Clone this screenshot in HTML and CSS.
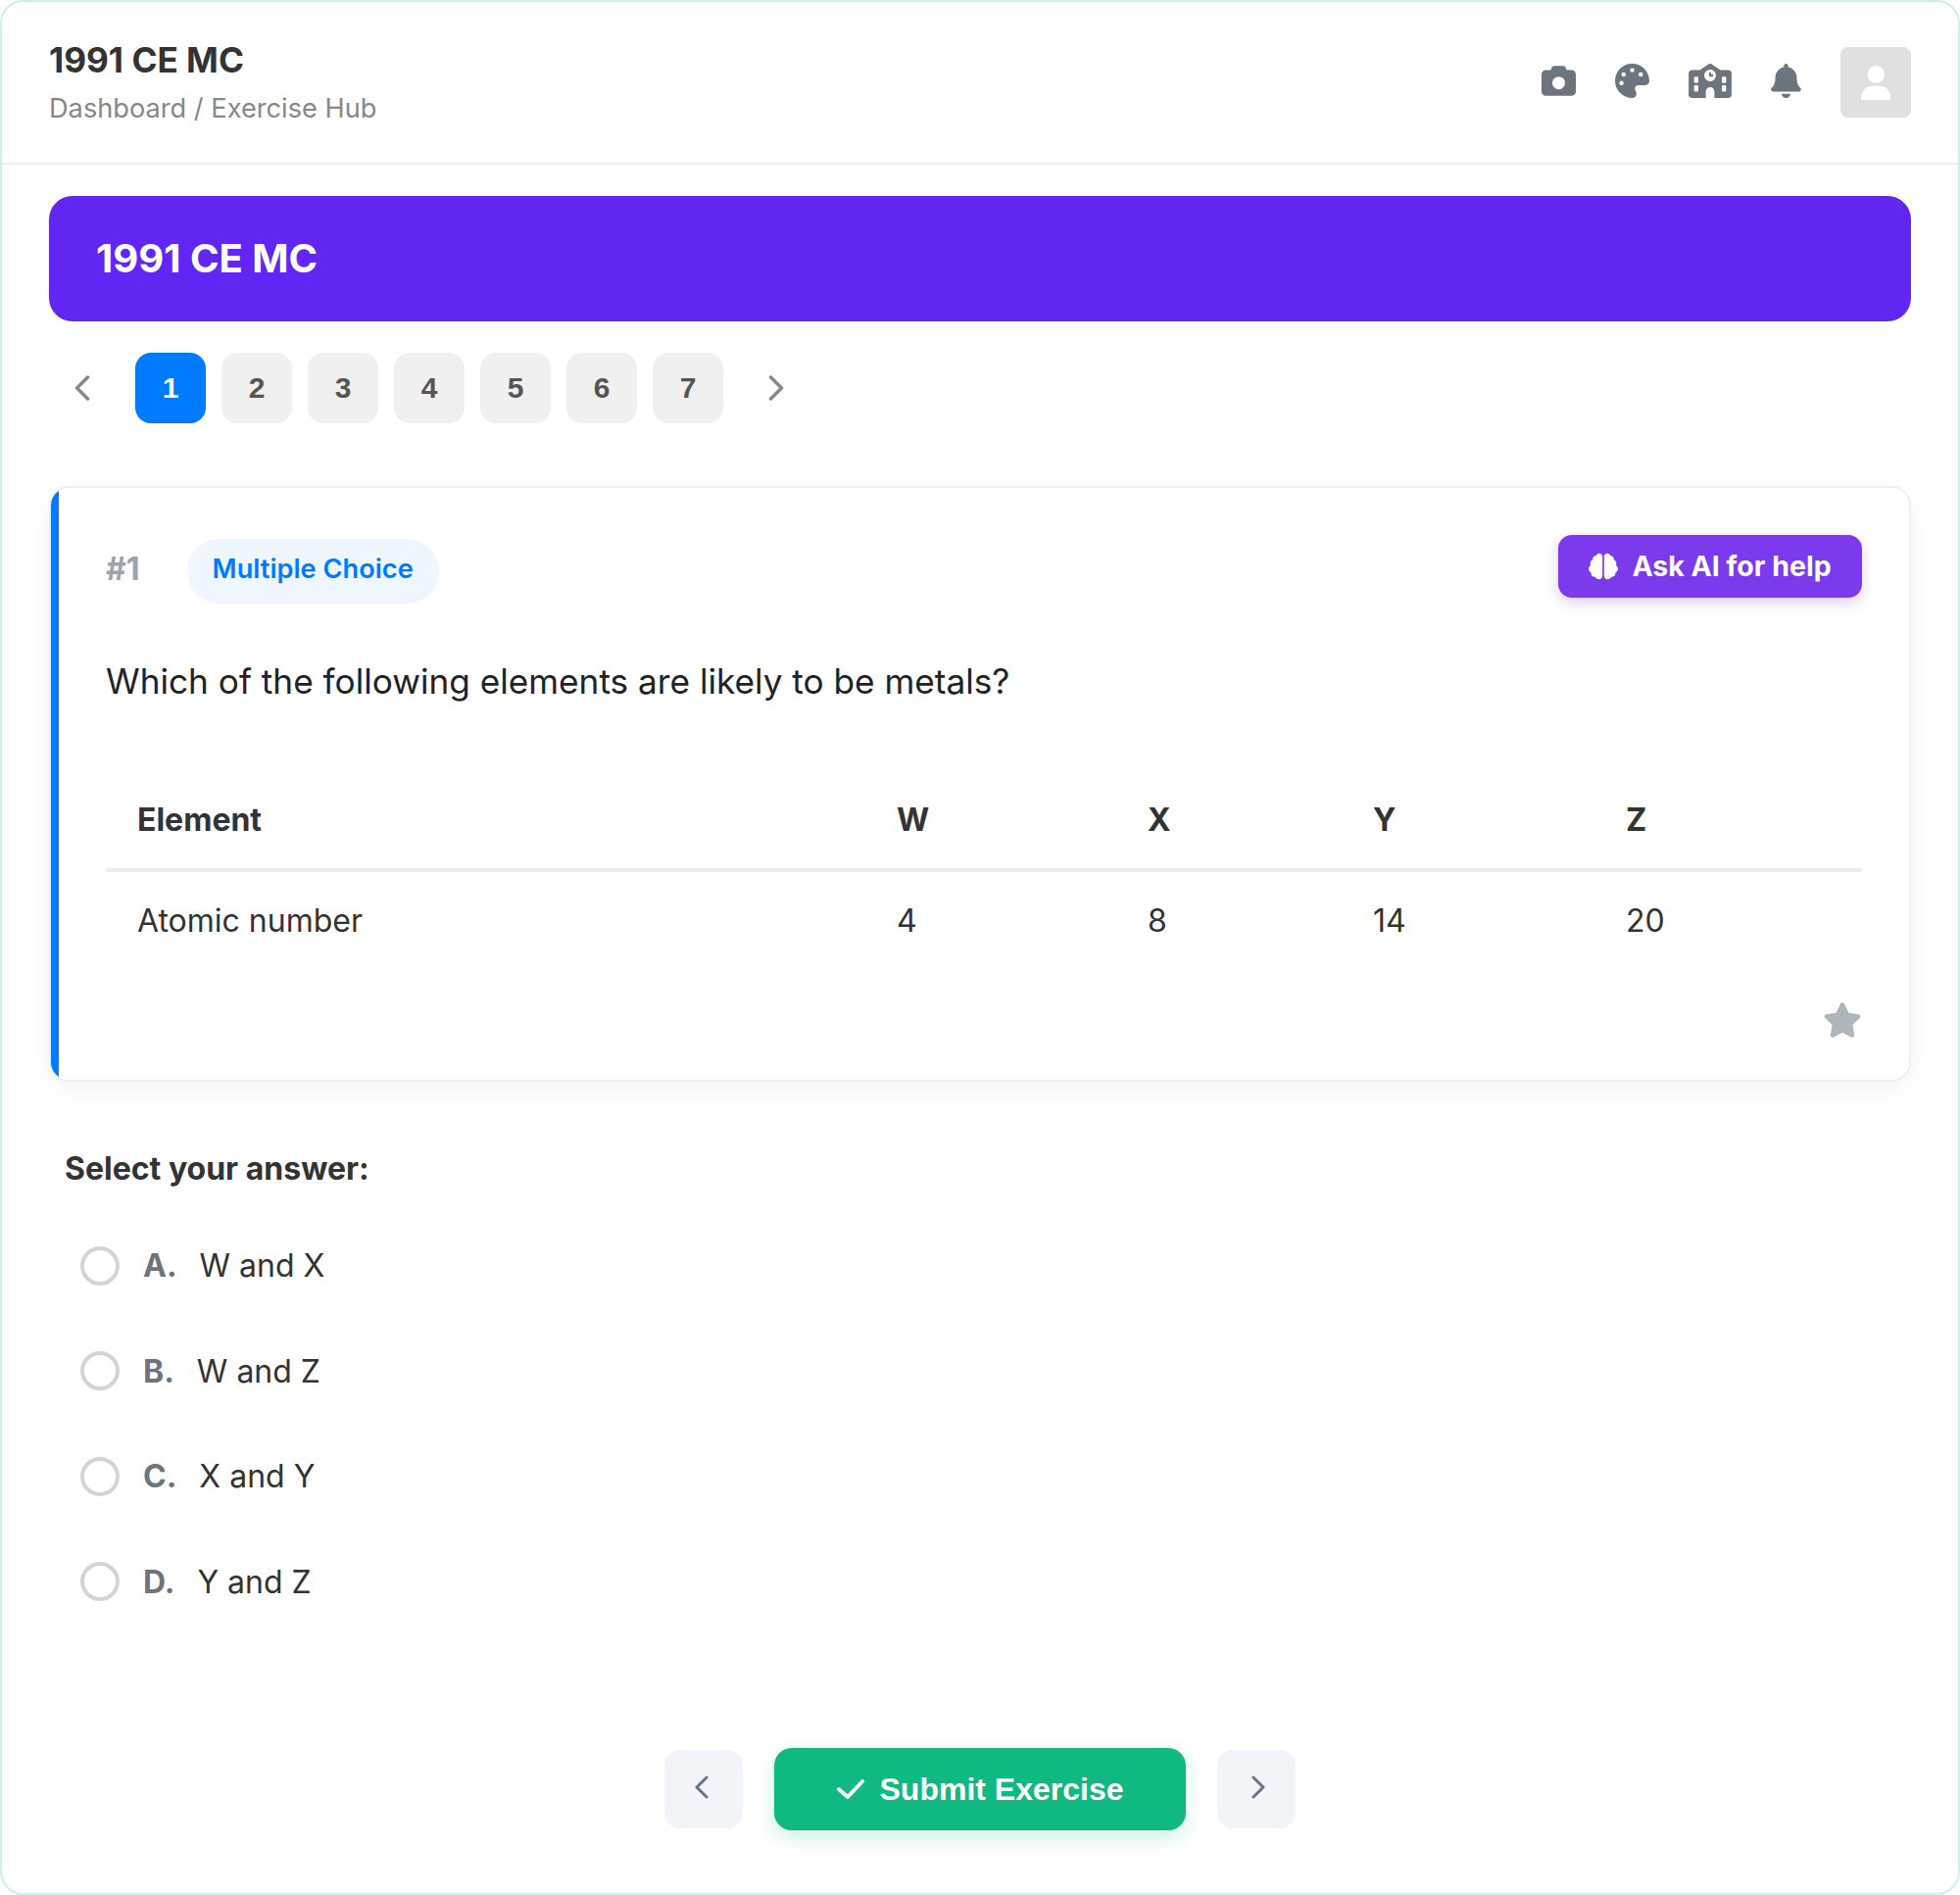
FILE: index.html
```html
<!DOCTYPE html>
<html lang="en">
<head>
    <meta charset="UTF-8">
    <title>1991 CE MC</title>
    <link rel="stylesheet" href="styles.css">
</head>
<body>
<div class="app">
    <header class="topbar">
        <div>
            <h1 class="topbar-title">1991 CE MC</h1>
            <div class="crumbs">Dashboard / Exercise Hub</div>
        </div>
        <div class="topbar-icons">
            <svg class="icon-top" viewBox="0 0 512 512"><path d="M149.1 64.8L138.7 96H64C28.7 96 0 124.7 0 160V416c0 35.3 28.7 64 64 64H448c35.3 0 64-28.7 64-64V160c0-35.3-28.7-64-64-64H373.3L362.9 64.8C356.4 45.2 338.1 32 317.4 32H194.6c-20.7 0-39 13.2-45.5 32.8zM256 192a96 96 0 1 1 0 192 96 96 0 1 1 0-192z"/></svg>
            <svg class="icon-top" viewBox="0 0 512 512"><path d="M512 256c0 .9 0 1.8 0 2.7c-.4 36.5-33.6 61.3-70.1 61.3H344c-26.5 0-48 21.5-48 48c0 3.4 .4 6.7 1 9.9c2.1 10.2 6.5 20 10.8 29.9c6.1 13.8 12.1 27.5 12.1 42c0 31.8-21.6 60.7-53.4 62c-3.5 .1-7 .2-10.6 .2C114.6 512 0 397.4 0 256S114.6 0 256 0S512 114.6 512 256zM128 288a32 32 0 1 0 -64 0 32 32 0 1 0 64 0zm0-96a32 32 0 1 0 0-64 32 32 0 1 0 0 64zM288 96a32 32 0 1 0 -64 0 32 32 0 1 0 64 0zm96 96a32 32 0 1 0 0-64 32 32 0 1 0 0 64z"/></svg>
            <svg class="icon-top icon-school" viewBox="0 0 640 512"><path d="M337.8 5.4C327-1.8 313-1.8 302.2 5.4L166.3 96H48C21.5 96 0 117.5 0 144V464c0 26.5 21.5 48 48 48H256V416c0-35.3 28.7-64 64-64s64 28.7 64 64v96H592c26.5 0 48-21.5 48-48V144c0-26.5-21.5-48-48-48H473.7L337.8 5.4zM96 192h32c8.8 0 16 7.2 16 16v64c0 8.8-7.2 16-16 16H96c-8.8 0-16-7.2-16-16V208c0-8.8 7.2-16 16-16zm400 16c0-8.8 7.2-16 16-16h32c8.8 0 16 7.2 16 16v64c0 8.8-7.2 16-16 16H512c-8.8 0-16-7.2-16-16V208zM96 320h32c8.8 0 16 7.2 16 16v64c0 8.8-7.2 16-16 16H96c-8.8 0-16-7.2-16-16V336c0-8.8 7.2-16 16-16zm400 16c0-8.8 7.2-16 16-16h32c8.8 0 16 7.2 16 16v64c0 8.8-7.2 16-16 16H512c-8.8 0-16-7.2-16-16V336zM232 176a88 88 0 1 1 176 0 88 88 0 1 1 -176 0zm88-48c-8.8 0-16 7.2-16 16v32c0 8.8 7.2 16 16 16h32c8.8 0 16-7.2 16-16s-7.2-16-16-16H336V144c0-8.8-7.2-16-16-16z"/></svg>
            <svg class="icon-top icon-bell" viewBox="0 0 448 512"><path d="M224 512c35.32 0 63.97-28.65 63.97-64H160.03c0 35.35 28.65 64 63.97 64zm215.39-149.71c-19.32-20.76-55.47-51.99-55.47-154.29 0-77.7-54.48-139.9-127.94-155.16V32c0-17.67-14.32-32-31.98-32s-31.98 14.33-31.98 32v20.84C118.56 68.1 64.08 130.3 64.08 208c0 102.3-36.15 133.53-55.47 154.29-6 6.45-8.66 14.16-8.61 21.71.11 16.4 12.98 32 32.1 32h383.8c19.12 0 32-15.6 32.1-32 .05-7.55-2.61-15.27-8.61-21.71z"/></svg>
            <div class="avatar">
                <svg class="avatar-icon" viewBox="0 0 448 512"><path d="M224 256A128 128 0 1 0 224 0a128 128 0 1 0 0 256zm-45.7 48C79.8 304 0 383.8 0 482.3C0 498.7 13.3 512 29.7 512H418.3c16.4 0 29.7-13.3 29.7-29.7C448 383.8 368.2 304 269.7 304H178.3z"/></svg>
            </div>
        </div>
    </header>

    <main class="content">
        <div class="banner">1991 CE MC</div>

        <nav class="pager">
            <button class="pager-arrow"><svg class="chev" viewBox="0 0 20 26"><path d="M13.5 2 2.5 13l11 11"/></svg></button>
            <button class="page-num cur">1</button>
            <button class="page-num">2</button>
            <button class="page-num">3</button>
            <button class="page-num">4</button>
            <button class="page-num">5</button>
            <button class="page-num">6</button>
            <button class="page-num">7</button>
            <button class="pager-arrow"><svg class="chev" viewBox="0 0 20 26"><path d="M6.5 2 17.5 13l-11 11"/></svg></button>
        </nav>

        <section class="card">
            <div class="card-head">
                <div class="card-meta">
                    <span class="q-num">#1</span>
                    <span class="q-type">Multiple Choice</span>
                </div>
                <button class="ask-ai">
                    <svg class="brain" viewBox="0 0 576 512"><path d="M208 0c-29.9 0-54.7 20.5-61.8 48.2-.8 0-1.4-.2-2.2-.2-35.3 0-64 28.7-64 64 0 4.8.6 9.5 1.7 14C52.5 138 32 166.6 32 200c0 12.6 3.2 24.3 8.3 34.9C16.3 248.7 0 274.3 0 304c0 33.3 20.4 61.9 49.4 73.9-.9 4.6-1.4 9.3-1.4 14.1 0 39.8 32.2 72 72 72 4.1 0 8.1-.5 12-1.2 9.6 28.5 36.2 49.2 68 49.2 39.8 0 72-32.2 72-72V64c0-35.3-28.7-64-64-64zm368 304c0-29.7-16.3-55.3-40.3-69.1 5.2-10.6 8.3-22.3 8.3-34.9 0-33.4-20.5-62-49.7-74 1-4.5 1.7-9.2 1.7-14 0-35.3-28.7-64-64-64-.8 0-1.5.2-2.2.2C422.7 20.5 397.9 0 368 0c-35.3 0-64 28.6-64 64v376c0 39.8 32.2 72 72 72 31.8 0 58.4-20.7 68-49.2 3.9.7 7.9 1.2 12 1.2 39.8 0 72-32.2 72-72 0-4.8-.5-9.5-1.4-14.1 29-12 49.4-40.6 49.4-73.9z"/></svg>
                    Ask AI for help
                </button>
            </div>

            <p class="question">Which of the following elements are likely to be metals?</p>

            <table class="el-table">
                <colgroup>
                    <col class="col-name"><col class="col-w"><col class="col-x"><col class="col-y"><col class="col-z">
                </colgroup>
                <thead>
                    <tr><th>Element</th><th>W</th><th>X</th><th>Y</th><th>Z</th></tr>
                </thead>
                <tbody>
                    <tr><td>Atomic number</td><td>4</td><td>8</td><td>14</td><td>20</td></tr>
                </tbody>
            </table>

            <div class="card-foot">
                <svg class="star" viewBox="0 0 576 512"><path d="M316.9 18C311.6 7 300.4 0 288.1 0s-23.4 7-28.8 18L195 150.3 51.4 171.5c-12 1.8-22 10.2-25.7 21.7s-.7 24.2 7.9 32.7L137.8 329 113.2 474.7c-2 12 3 24.2 12.9 31.3s23 8 33.8 2.3l128.3-68.5 128.3 68.5c10.8 5.7 23.9 4.9 33.8-2.3s14.9-19.3 12.9-31.3L438.5 329 542.7 225.9c8.6-8.5 11.7-21.2 7.9-32.7s-13.7-19.9-25.7-21.7L381.2 150.3 316.9 18z"/></svg>
            </div>
        </section>

        <section class="answers">
            <h2 class="answers-title">Select your answer:</h2>
            <div class="option"><span class="radio"></span><span class="opt-letter">A.</span><span class="opt-text">W and X</span></div>
            <div class="option"><span class="radio"></span><span class="opt-letter">B.</span><span class="opt-text">W and Z</span></div>
            <div class="option"><span class="radio"></span><span class="opt-letter">C.</span><span class="opt-text">X and Y</span></div>
            <div class="option"><span class="radio"></span><span class="opt-letter">D.</span><span class="opt-text">Y and Z</span></div>
        </section>

        <div class="bottom-nav">
            <button class="nav-btn"><svg class="nav-chev" viewBox="0 0 18 28"><path d="M12 2 2 12l10 10"/></svg></button>
            <button class="submit">
                <svg class="check" viewBox="0 0 28 20"><path d="M2 10l9 8L26 2"/></svg>
                Submit Exercise
            </button>
            <button class="nav-btn"><svg class="nav-chev" viewBox="0 0 18 28"><path d="M6 2l10 10-10 10"/></svg></button>
        </div>
    </main>
</div>
</body>
</html>
```

FILE: styles.css
```css
*{
    margin: 0;
    padding: 0;
    box-sizing: border-box;
}
body{
    background-color: #fff;
    font-family: Inter, "Liberation Sans", sans-serif;
    color: #333;
}
button{
    border: none;
    cursor: pointer;
}
.app{
    height: 1934px;
    border: 2px solid #cdf0e9;
    border-radius: 24px;
    background-color: #fff;
}

/* top bar */
.topbar{
    height: 166px;
    padding: 0 48px;
    display: flex;
    justify-content: space-between;
    align-items: center;
    border-bottom: 2px solid #eee;
}
.topbar-title{
    font-size: 35.2px;
    line-height: 44px;
    font-weight: 700;
}
.crumbs{
    margin-top: 10px;
    font-size: 27.2px;
    line-height: 36px;
    color: #888;
}
.topbar-icons{
    display: flex;
    align-items: center;
    gap: 40px;
}
.icon-top{
    width: 35px;
    height: 35px;
    margin-bottom: 3px;
    fill: #6c757d;
}
.icon-school{
    width: 44px;
}
.icon-bell{
    width: 31px;
}
.avatar{
    width: 72px;
    height: 72px;
    border-radius: 8px;
    background-color: #e0e0e0;
    display: flex;
    justify-content: center;
    align-items: center;
}
.avatar-icon{
    width: 30.6px;
    height: 35px;
    fill: #fff;
}

.content{
    padding: 32px 48px 0;
}
.banner{
    height: 128px;
    padding: 0 48px 1px;
    display: flex;
    align-items: center;
    border-radius: 24px;
    background-color: #6226f3;
    color: #fff;
    font-size: 40px;
    font-weight: 700;
}

/* page numbers */
.pager{
    margin-top: 32px;
    display: flex;
    gap: 16px;
}
.pager-arrow{
    width: 72px;
    height: 72px;
    background: none;
    display: flex;
    justify-content: center;
    align-items: center;
}
.chev{
    width: 20px;
    height: 26px;
    fill: none;
    stroke: #888;
    stroke-width: 3.5;
    stroke-linecap: round;
    stroke-linejoin: round;
}
.page-num{
    width: 72px;
    height: 72px;
    border-radius: 16px;
    background-color: #f0f0f0;
    color: #555;
    font-family: "Liberation Sans", sans-serif;
    font-size: 30px;
    font-weight: 700;
}
.page-num.cur{
    background-color: #007bff;
    color: #fff;
}

/* question card */
.card{
    position: relative;
    overflow: hidden;
    height: 608px;
    margin-top: 64px;
    padding: 48px 48px 0 56px;
    border: 2px solid #f0f0f0;
    border-radius: 20px;
    background-color: #fff;
    box-shadow: 0 8px 30px rgba(0,0,0,0.05);
}
.card::before{
    content: "";
    position: absolute;
    left: 0;
    top: 0;
    bottom: 0;
    width: 8px;
    background-color: #007bff;
}
.card-head{
    display: flex;
    justify-content: space-between;
    align-items: flex-start;
}
.card-meta{
    margin-top: 4px;
    display: flex;
    align-items: center;
    gap: 48px;
}
.q-num{
    padding-bottom: 5px;
    font-size: 32px;
    font-weight: 700;
    color: #9ca3af;
}
.q-type{
    height: 66px;
    padding: 0 26px 5px;
    display: flex;
    align-items: center;
    border-radius: 33px;
    background-color: #eff6ff;
    color: #007bff;
    font-size: 27.2px;
    font-weight: 600;
}
.ask-ai{
    height: 64px;
    width: 310px;
    display: flex;
    justify-content: center;
    align-items: center;
    gap: 14px;
    padding-bottom: 1px;
    border-radius: 14px;
    background-color: #7c3aed;
    color: #fff;
    font-family: Inter, sans-serif;
    font-size: 28.5px;
    font-weight: 700;
    box-shadow: 0 5px 14px rgba(124,58,237,0.25);
}
.brain{
    width: 30px;
    height: 28px;
    fill: #fff;
}
.question{
    margin-top: 54px;
    font-size: 35.2px;
    line-height: 50px;
    color: #222;
}
.el-table{
    width: 100%;
    margin-top: 68px;
    table-layout: fixed;
    border-collapse: collapse;
    font-size: 32px;
}
.col-name{ width: 775px; }
.col-w{ width: 256px; }
.col-x{ width: 230px; }
.col-y{ width: 258px; }
.el-table th{
    height: 100px;
    padding: 0 32px 2px;
    text-align: left;
    font-weight: 700;
    border-bottom: 4px solid #eee;
}
.el-table td{
    height: 100px;
    padding: 0 32px;
}
.card-foot{
    margin-top: 35px;
    display: flex;
    justify-content: flex-end;
}
.star{
    width: 40px;
    height: 36px;
    fill: #adb5bd;
}

/* answers */
.answers{
    margin-top: 67px;
    padding-left: 16px;
}
.answers-title{
    font-size: 32px;
    line-height: 44px;
    font-weight: 700;
}
.option{
    height: 107.5px;
    padding-left: 16px;
    display: flex;
    align-items: center;
    font-size: 32px;
}
.answers-title + .option{
    margin-top: 23px;
}
.radio{
    width: 40px;
    height: 40px;
    margin-right: 24px;
    border: 4px solid #d1d5db;
    border-radius: 50%;
}
.opt-letter{
    margin-right: 23px;
    font-weight: 700;
    color: #6c757d;
}

/* bottom buttons */
.bottom-nav{
    margin-top: 116px;
    display: flex;
    justify-content: center;
    align-items: center;
    gap: 32px;
}
.nav-btn{
    width: 80px;
    height: 80px;
    border-radius: 16px;
    background-color: #f1f5f9;
    display: flex;
    justify-content: center;
    align-items: center;
}
.nav-chev{
    width: 18px;
    height: 28px;
    fill: none;
    stroke: #64748b;
    stroke-width: 3;
    stroke-linecap: round;
    stroke-linejoin: round;
}
.submit{
    width: 420px;
    height: 84px;
    display: flex;
    justify-content: center;
    align-items: center;
    gap: 16px;
    border-radius: 18px;
    background-color: #10b981;
    color: #fff;
    font-family: "Liberation Sans", sans-serif;
    font-size: 32px;
    font-weight: 700;
    box-shadow: 0 8px 20px rgba(16,185,129,0.2);
}
.check{
    width: 28px;
    height: 20px;
    fill: none;
    stroke: #fff;
    stroke-width: 4;
    stroke-linecap: round;
    stroke-linejoin: round;
}
```
